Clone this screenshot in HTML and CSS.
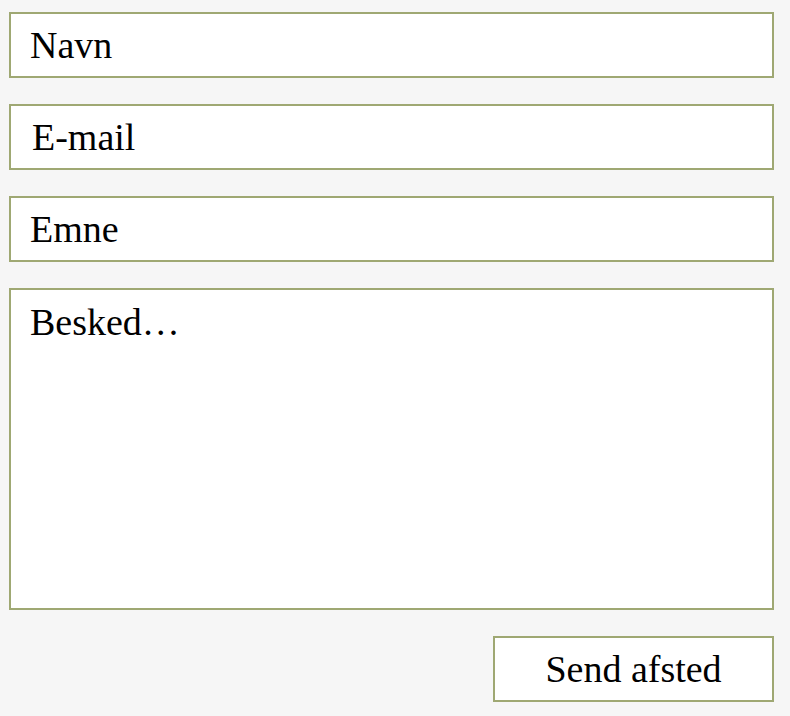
FILE: index.html
```html
<!DOCTYPE html>
<html lang="da">
<head>
<meta charset="utf-8">
<title>Kontakt</title>
<link rel="stylesheet" href="styles.css">
</head>
<body>
<form class="contact">
  <input class="field" type="text" placeholder="Navn">
  <input class="field field-email" type="email" placeholder="E-mail">
  <input class="field" type="text" placeholder="Emne">
  <textarea class="field message" placeholder="Besked…"></textarea>
  <div class="actions">
    <button class="send" type="button">Send afsted</button>
  </div>
</form>
</body>
</html>
```

FILE: styles.css
```css
html, body {
  margin: 0;
  padding: 0;
  background: #f6f6f6;
}

.contact {
  display: flex;
  flex-direction: column;
  gap: 26px;
  width: 765px;
  padding: 12px 0 0 9px;
}

.field {
  display: block;
  box-sizing: border-box;
  width: 765px;
  height: 66px;
  margin: 0;
  border: 2px solid #9fa873;
  border-radius: 0;
  background: #fff;
  padding: 0 19px;
  font-family: "Liberation Serif", "Times New Roman", serif;
  font-size: 38px;
  color: #000;
  outline: none;
}

.field-email {
  padding-left: 21px;
}

.field::placeholder {
  color: #000;
  opacity: 1;
}

.message {
  height: 322px;
  padding: 10px 19px;
  line-height: 44px;
  resize: none;
}

.actions {
  display: flex;
  justify-content: flex-end;
}

.send {
  box-sizing: border-box;
  width: 281px;
  height: 66px;
  margin: 0;
  border: 2px solid #9fa873;
  border-radius: 0;
  background: #fff;
  font-family: "Liberation Serif", "Times New Roman", serif;
  font-size: 38px;
  color: #000;
  padding: 0;
  cursor: pointer;
}
```
